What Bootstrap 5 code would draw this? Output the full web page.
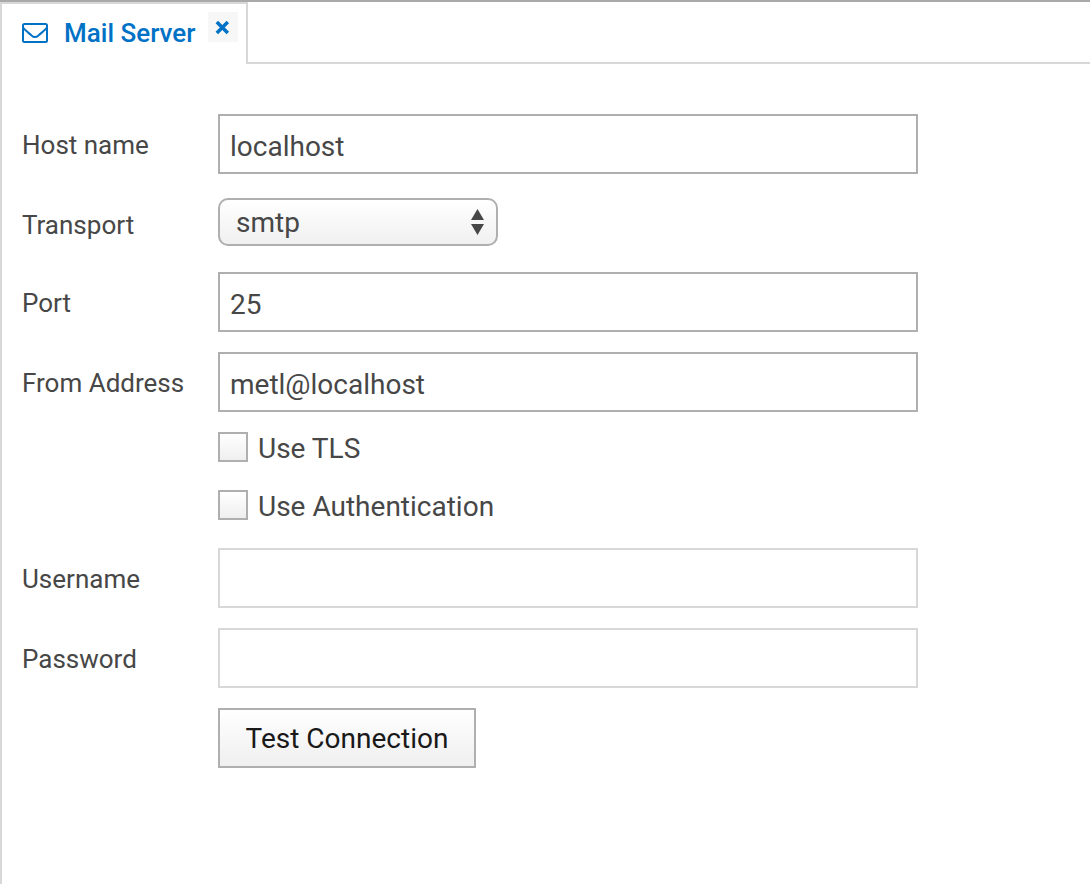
<!DOCTYPE html>
<html lang="en">
<head>
<meta charset="utf-8">
<meta name="viewport" content="width=device-width, initial-scale=1">
<title>Mail Server</title>
<link href="https://cdn.jsdelivr.net/npm/bootstrap@5.3.0/dist/css/bootstrap.min.css" rel="stylesheet">
<style>
  body { font-family: Roboto, sans-serif; font-size: 28px; line-height: 38px; color: #474747; background: #fff; }
  .panel-view { border-top: 2px solid #a9a9a9; }
  .panel-body { border-left: 2px solid #d8d8d8; }
  .tab-item { height: 62px; padding: 8px 8px 0 20px; border: solid #d8d8d8; border-width: 2px 2px 0; color: #0072c6; }
  .tab-link { color: inherit; font-size: 26px; font-weight: 500; line-height: 42px; gap: 16px; }
  .tab-close { width: 30px; height: 30px; margin-left: 13px; background: #f7f7f7; color: inherit; }
  .tab-rest { border-bottom: 2px solid #d8d8d8; }
  .mail-form { padding: 50px 20px; gap: 20px; }
  .form-line { min-height: 38px; }
  .line-label { width: 196px; font-size: 26px; line-height: 58px; padding-top: 2px; margin-bottom: -2px; }
  .line-field { max-width: 700px; min-width: 0; }
  .form-control, .form-control:focus { height: 60px; padding: 4px 10px 0; font-size: 28px; color: #474747; border: 2px solid #afafaf; border-radius: 0; box-shadow: none; }
  .form-control:disabled { background: #fff; border-color: #d8d8d8; opacity: 1; }
  .select-wrap { width: 280px; max-width: 100%; margin-top: 4px; }
  .form-select { height: 48px; padding: 2px 40px 0 16px; font-size: 28px; line-height: 42px; color: #474747; border: 2px solid #afafaf; border-radius: 10px; background: linear-gradient(#fff, #f0f0f0); }
  .select-arrows { position: absolute; right: 14px; top: 11px; pointer-events: none; }
  .form-check-input[type=checkbox] { width: 30px; height: 30px; margin: 0; border: 2px solid #afafaf; border-radius: 0; background-image: linear-gradient(#fff, #efefef); }
  .check-label { line-height: 34px; padding-left: 10px; }
  .btn-test, .btn-test:hover { height: 60px; min-width: 258px; padding: 2px 24px 0; font-size: 28px; line-height: 54px; color: #191919; border: 2px solid #afafaf; border-radius: 0; background: linear-gradient(#fff, #efefef); }
</style>
</head>
<body>
<main class="panel-view d-flex flex-column min-vh-100">
  <nav class="d-flex">
    <div class="tab-item d-flex align-items-start">
      <a class="tab-link d-flex align-items-center text-decoration-none" href="#mail">
        <svg width="26" height="20" viewBox="0 0 26 20" fill="none" stroke="currentColor" stroke-width="2" aria-hidden="true"><rect x="1" y="1" width="24" height="18" rx="1.500"/><path d="M1 4.500C3 7.500 7 10 9.500 12.400Q13 15.600 16.500 12.400C19 10 23 7.500 25 4.500"/></svg>
        <span>Mail Server</span>
      </a>
      <button class="tab-close btn p-0 border-0 rounded-0 d-flex align-items-center justify-content-center" type="button" aria-label="Close tab">
        <svg width="16" height="16" viewBox="0 0 16 16" fill="none" stroke="currentColor" stroke-width="3.500" aria-hidden="true"><path d="M1.800 3 12.800 14M12.800 3 1.800 14"/></svg>
      </button>
    </div>
    <div class="tab-rest flex-grow-1"></div>
  </nav>
  <section class="panel-body flex-grow-1" id="mail">
    <form class="mail-form d-flex flex-column">
      <div class="form-line d-flex">
        <label class="line-label flex-shrink-0" for="host">Host name</label>
        <div class="line-field flex-grow-1"><input class="form-control" id="host" type="text" value="localhost"></div>
      </div>
      <div class="form-line d-flex">
        <label class="line-label flex-shrink-0" for="transport">Transport</label>
        <div class="line-field flex-grow-1">
          <div class="select-wrap position-relative">
            <select class="form-select" id="transport"><option>smtp</option><option>smtps</option></select>
            <svg class="select-arrows" width="13" height="26" viewBox="0 0 13 26" fill="#474747" aria-hidden="true"><path d="M6.500 0 13 11H0ZM0 15H13L6.500 26Z"/></svg>
          </div>
        </div>
      </div>
      <div class="form-line d-flex">
        <label class="line-label flex-shrink-0" for="port">Port</label>
        <div class="line-field flex-grow-1"><input class="form-control" id="port" type="text" value="25"></div>
      </div>
      <div class="form-line d-flex">
        <label class="line-label flex-shrink-0" for="from">From Address</label>
        <div class="line-field flex-grow-1"><input class="form-control" id="from" type="text" value="metl@localhost"></div>
      </div>
      <div class="form-line d-flex">
        <div class="line-label flex-shrink-0"></div>
        <div class="d-flex align-items-start">
          <input class="form-check-input" id="tls" type="checkbox">
          <label class="check-label" for="tls">Use TLS</label>
        </div>
      </div>
      <div class="form-line d-flex">
        <div class="line-label flex-shrink-0"></div>
        <div class="d-flex align-items-start">
          <input class="form-check-input" id="auth" type="checkbox">
          <label class="check-label" for="auth">Use Authentication</label>
        </div>
      </div>
      <div class="form-line d-flex">
        <label class="line-label flex-shrink-0" for="user">Username</label>
        <div class="line-field flex-grow-1"><input class="form-control" id="user" type="text" disabled></div>
      </div>
      <div class="form-line d-flex">
        <label class="line-label flex-shrink-0" for="pass">Password</label>
        <div class="line-field flex-grow-1"><input class="form-control" id="pass" type="password" disabled></div>
      </div>
      <div class="form-line d-flex">
        <div class="line-label flex-shrink-0"></div>
        <button class="btn btn-test" type="button">Test Connection</button>
      </div>
    </form>
  </section>
</main>
<script src="https://cdn.jsdelivr.net/npm/bootstrap@5.3.0/dist/js/bootstrap.bundle.min.js"></script>
</body>
</html>
